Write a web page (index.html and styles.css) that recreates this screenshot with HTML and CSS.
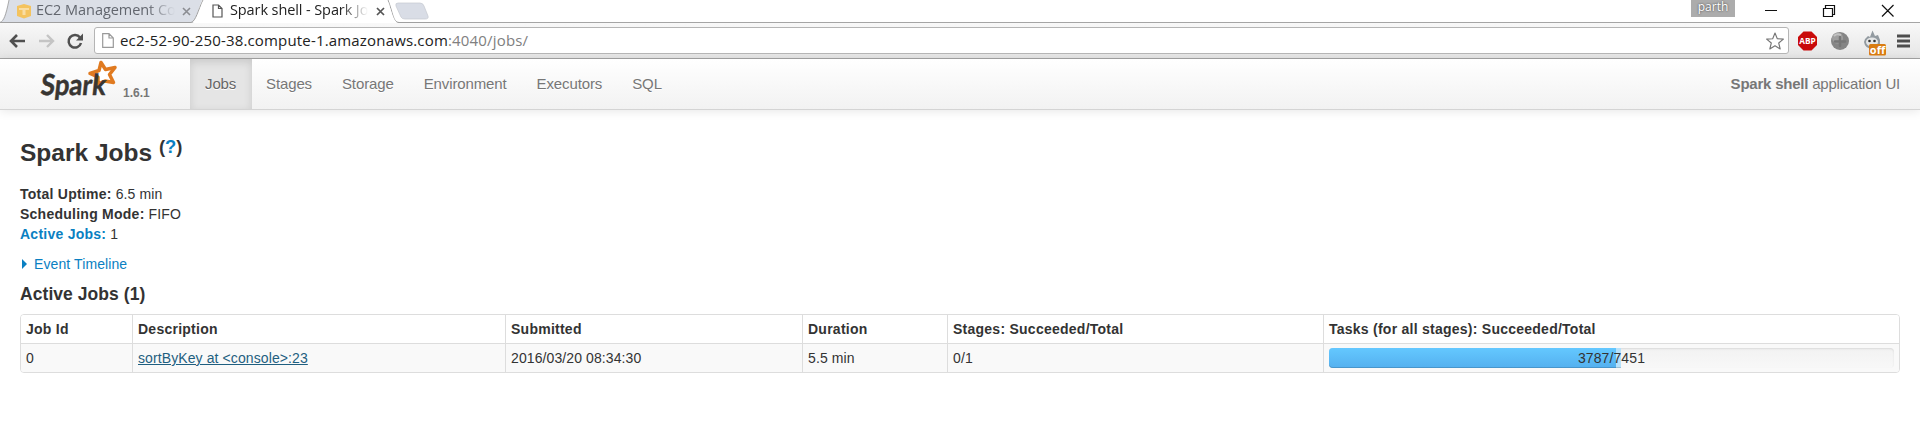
FILE: index.html
```html
<!DOCTYPE html>
<html lang="en">
<head>
<meta charset="utf-8">
<title>Spark shell - Spark Jobs</title>
<link rel="stylesheet" href="styles.css">
</head>
<body>
<div class="browser">
  <div class="tabstrip">
    <svg class="tabshapes" width="440" height="23" viewBox="0 0 440 23">
      <path d="M0 22C3 21 5 16 9 0H202C198 9 196 20 192 22.500H0Z" fill="#dbdfe7"/>
      <path d="M0 22.500C4 21 6 15 9 0" fill="none" stroke="#aaa"/>
      <path d="M0 22.500H191C196 21 198 10 203 0H388C393 13 393 22.500 399 22.500H440" fill="none" stroke="#a0a0a0"/>
      <path d="M192 23C198 21 199 10 203.500 0H387.500C392 12 393 21 398 23Z" fill="#fff"/>
      <path d="M398 3H420Q423 3 424 6L428 16Q429 19 425 19H405Q402 19 401 17L396 6Q395 3 398 3Z" fill="#d9dde6" stroke="#c6c9d0" stroke-width=".7"/>
    </svg>
    <div class="tab tab-back">
      <svg width="16" height="16" viewBox="0 0 16 16"><path d="M1 3 8 1 15 3V13L8 15.500 1 13Z" fill="#f4c35e"/><path d="M3 5H13V7H9.500V12H6.500V7H3Z" fill="#f9dda3"/></svg>
      <span class="tab-title t1">EC2 Management Co</span>
      <svg class="x" width="9" height="9" viewBox="0 0 9 9"><path d="M1 1 8 8M8 1 1 8" stroke="#8b8d92" stroke-width="1.600"/></svg>
    </div>
    <div class="tab tab-front">
      <svg width="11" height="14" viewBox="0 0 11 14"><path d="M1 1H6.500L10 4.500V13H1ZM6.500 1V4.500H10" fill="#fff" stroke="#555" stroke-width="1.200"/></svg>
      <span class="tab-title t2">Spark shell - Spark Jo</span>
      <svg class="x" width="9" height="9" viewBox="0 0 9 9"><path d="M1 1 8 8M8 1 1 8" stroke="#555" stroke-width="1.700"/></svg>
    </div>
    <div class="window">
      <span class="user">parth</span>
      <svg width="130" height="22" viewBox="0 0 130 22" fill="none" stroke="#111" stroke-width="1.200"><path d="M0 10.500H12M58.500 8.500H67.500V16.500H58.500ZM60.500 8V5.500H69.500V14.500H67.500M117 5 128.500 16.500M128.500 5 117 16.500"/></svg>
    </div>
  </div>
  <div class="toolbar">
    <svg class="navicons" width="84" height="34" viewBox="0 0 84 34" fill="none">
      <path d="M25 17H12M17 11 11 17 17 23" stroke="#505050" stroke-width="2.600"/>
      <path d="M39 17H52M47 11 53 17 47 23" stroke="#c4c4c4" stroke-width="2.400"/>
      <path d="M80 13.500A6.300 6.300 0 1 0 81 19" stroke="#505050" stroke-width="2.500"/><path d="M83 9.500V16.500H76Z" fill="#505050"/>
    </svg>
    <div class="omnibox">
      <svg width="12" height="15" viewBox="0 0 12 15"><path d="M.7.700H7L11.300 5V14.300H.7ZM7 .700V5H11.300" fill="#fff" stroke="#9a9a9a" stroke-width="1.200"/></svg>
      <span class="url">ec2-52-90-250-38.compute-1.amazonaws.com<span>:4040/jobs/</span></span>
      <svg class="star" width="18" height="18" viewBox="0 0 18 18"><path d="M9 1 11.300 6.700 17.400 7.100 12.700 11 14.200 17 9 13.700 3.800 17 5.300 11 .6 7.100 6.700 6.700Z" fill="#fff" stroke="#747474" stroke-width="1.100" stroke-linejoin="round"/></svg>
    </div>
    <svg class="ext" width="122" height="34" viewBox="0 0 122 34">
      <path d="M5.500 7.500H13.500L19 13V21L13.500 26.500H5.500L0 21V13Z" fill="#c90a0a"/>
      <text class="abp" x="9.500" y="20.300" text-anchor="middle" textLength="16.500" lengthAdjust="spacingAndGlyphs">ABP</text>
      <circle cx="42" cy="17" r="9" fill="#858585"/><circle cx="39.500" cy="14" r="5.500" fill="#9f9f9f"/><path d="M37 17.500H47M42 13V22" stroke="#777" stroke-width="2.500" stroke-linecap="round"/><path d="M36 12Q39 9 43 11" fill="none" stroke="#c2c2c2" stroke-width="2"/>
      <path d="M67 15 70 12 72 13 74.500 6.500 77 12 80 11 82 16Q83 25 75 25 67 25 66 18Z" fill="#929aa0"/><ellipse cx="74" cy="18" rx="6" ry="4.500" fill="#e5e7e8"/><circle cx="71.500" cy="17" r="1.300" fill="#333"/><circle cx="76.500" cy="17" r="1.300" fill="#333"/>
      <rect x="71" y="20" width="17" height="11.500" rx="1.500" fill="#d97c12"/><text class="off" x="79.500" y="29.500" text-anchor="middle">off</text>
      <path d="M99 12H112M99 17H112M99 22H112" stroke="#4d4d4d" stroke-width="2.800"/>
    </svg>
  </div>
</div>
<header class="navbar">
  <div class="brand">
    <svg width="80" height="42" viewBox="0 0 80 42">
      <path d="M61 2.500 65.500 9.500 75 7.500 69.500 14.500 73.500 22.500 65 21 58 24 58 17 50 13.500 59 10.500Z" fill="#fff" stroke="#e07a20" stroke-width="3.500" stroke-linejoin="round"/>
      <text class="logo" transform="translate(0 35) skewX(-6)" x="0" y="0" textLength="65" lengthAdjust="spacingAndGlyphs">Spark</text>
    </svg>
    <span class="version">1.6.1</span>
  </div>
  <nav><a class="active">Jobs</a><a>Stages</a><a>Storage</a><a>Environment</a><a>Executors</a><a>SQL</a></nav>
  <p class="app"><b>Spark shell</b> application UI</p>
</header>
<main>
  <h3>Spark Jobs <sup>(<a>?</a>)</sup></h3>
  <ul>
    <li><b>Total Uptime:</b> 6.5 min</li>
    <li><b>Scheduling Mode:</b> FIFO</li>
    <li><a><b>Active Jobs:</b></a> 1</li>
  </ul>
  <div class="timeline"><i></i><a>Event Timeline</a></div>
  <h4>Active Jobs (1)</h4>
  <div class="table">
    <div class="row head"><b>Job Id</b><b>Description</b><b>Submitted</b><b>Duration</b><b>Stages: Succeeded/Total</b><b>Tasks (for all stages): Succeeded/Total</b></div>
    <div class="row"><span>0</span><span><a class="job">sortByKey at &lt;console&gt;:23</a></span><span>2016/03/20 08:34:30</span><span>5.5 min</span><span>0/1</span>
      <div class="cell"><div class="progress"><div class="bar light" style="width:51.600%"></div><div class="bar" style="width:50.830%"></div><span class="count">3787/7451</span></div></div>
    </div>
  </div>
</main>
</body>
</html>
```
FILE: styles.css
```css
* { box-sizing: border-box; }
body { margin: 0; height: 445px; overflow: hidden; background: #fff; color: #333; font: 14px/20px "Liberation Sans", Arial, sans-serif; }
svg { display: block; flex: none; }
a { color: #0a80c2; }
.browser { font-family: "Open Sans", "Noto Sans", sans-serif; }
.tabstrip { position: relative; height: 23px; display: flex; border-bottom: 1px solid #a5a5a5; }
.tabshapes { position: absolute; left: 0; top: 0; }
.tab { position: relative; display: flex; align-items: center; height: 22px; font-size: 14.500px; }
.tab-back { width: 203px; padding-left: 16px; }
.tab-front { width: 200px; padding-left: 9px; }
.tab-title { white-space: nowrap; overflow: hidden; height: 20px; line-height: 18px; }
.t1 { width: 139px; margin-left: 4px; color: #62666e; -webkit-mask-image: linear-gradient(90deg, #000 80%, transparent); letter-spacing: -.05px; }
.t2 { width: 138px; margin-left: 7px; color: #222; -webkit-mask-image: linear-gradient(90deg, #000 80%, transparent); letter-spacing: -.1px; }
.tab .x { margin-left: 7px; }
.t2 + .x { margin-left: 8px; }
.window { margin-left: auto; display: flex; width: 229px; }
.user { width: 44px; height: 17px; margin-right: 30px; background: #acacac; color: #fff; font-size: 12px; line-height: 14px; text-align: center; text-shadow: 0 0 2px #333; }
.toolbar { height: 36px; display: flex; align-items: center; background: linear-gradient(#f8f8f8, #e6e6e6); border-bottom: 1px solid #a4a4a4; }
.navicons { margin-right: 10px; }
.omnibox { width: 1695px; height: 27px; display: flex; align-items: center; padding: 0 4px 0 7px; background: #fff; border: 1px solid #b5b5b5; border-radius: 3px; }
.url { margin-left: 6px; color: #222; font-size: 15px; letter-spacing: .17px; line-height: 24px; height: 26px; white-space: nowrap; }
.url span { color: #808080; }
.star { margin-left: auto; }
.ext { margin-left: 9px; }
.abp { fill: #fff; font: bold 9px "Open Sans", sans-serif; }
.off { fill: #fff; font: bold 11px "Open Sans", sans-serif; }
.navbar { height: 51px; display: flex; background: linear-gradient(#fff, #f2f2f2); border-bottom: 1px solid #d4d4d4; box-shadow: 0 1px 10px rgba(0,0,0,.1); color: #777; font-size: 15px; line-height: 50px; }
.brand { width: 190px; padding: 1px 0 0 40px; display: flex; }
.logo { fill: #383532; stroke: #383532; stroke-width: .5px; font: bold 29px Lato, sans-serif; }
.version { margin: 23px 0 0 3px; font: bold 12px/20px "Liberation Sans", sans-serif; }
.navbar nav { display: flex; }
.navbar nav a { padding: 0 15px; color: #777; letter-spacing: -.12px; text-shadow: 0 1px 0 #fff; }
.navbar nav .active { width: 62px; background: #e5e5e5; color: #666; box-shadow: inset 0 3px 8px rgba(0,0,0,.125); }
.navbar nav .active + a { margin-left: -1px; }
.app { margin: 0 20px 0 auto; letter-spacing: -.22px; }
main { padding: 23px 20px 0; }
h3 { margin: 0; font-size: 24.500px; line-height: 40px; }
h3 sup { font-size: 18.400px; line-height: 0; position: relative; vertical-align: baseline; top: -8px; }
ul { list-style: none; margin: 11px 0 10px; padding: 0; letter-spacing: .12px; }
li b { letter-spacing: .25px; }
.timeline { display: flex; align-items: center; height: 20px; letter-spacing: .1px; }
.timeline i { margin: 0 7px 0 2px; border-left: 5px solid #0a80c2; border-top: 5px solid transparent; border-bottom: 5px solid transparent; }
h4 { margin: 10px 0; font-size: 17.500px; line-height: 20px; letter-spacing: .06px; }
.table { border: 1px solid #ddd; border-radius: 4px; overflow: hidden; letter-spacing: .1px; }
.row { display: grid; grid-template-columns: 111px 373px 297px 145px 376px 1fr; height: 28px; line-height: 20px; background: #f9f9f9; }
.row > * { padding: 4px 5px; border-left: 1px solid #ddd; }
.row > :first-child { border-left: 0; }
.row.head { height: 29px; background: #fff; border-bottom: 1px solid #ddd; letter-spacing: .25px; }
.job { color: #1f5f80; text-decoration: underline; }
.progress { position: relative; height: 20px; border-radius: 4px; background: linear-gradient(#f2f2f2, #f8f8f8); box-shadow: inset 0 1px 2px rgba(0,0,0,.1); }
.bar { position: absolute; left: 0; top: 0; height: 20px; border-radius: 4px 0 0 4px; background: linear-gradient(#64c8ff, #54b0ef); box-shadow: inset 0 -1px 0 rgba(0,0,0,.15); }
.bar.light { background: #b8e2fb; }
.count { position: absolute; inset: 0; text-align: center; }
```
